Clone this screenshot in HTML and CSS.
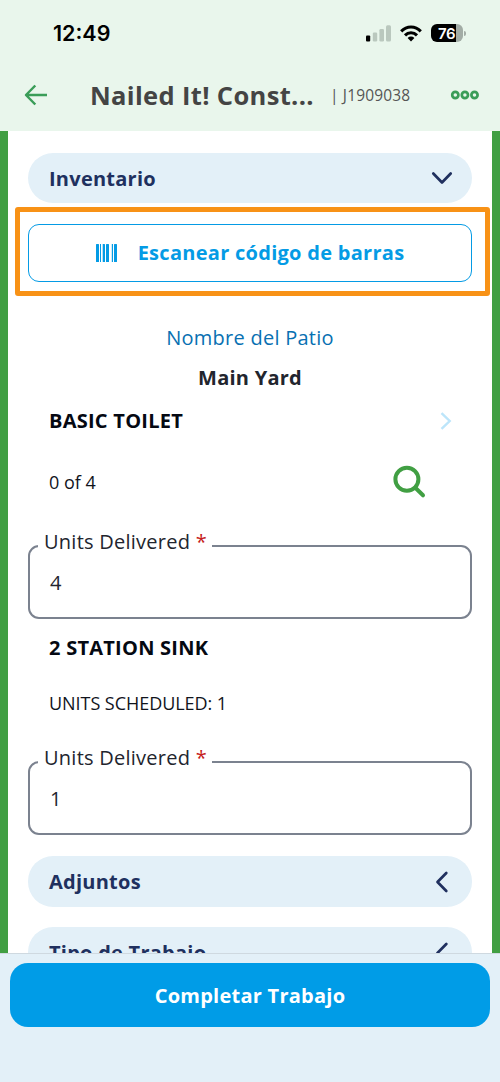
FILE: index.html
```html
<!DOCTYPE html>
<html lang="es">
<head>
<meta charset="utf-8">
<title>Nailed It! Construction</title>
<link rel="stylesheet" href="styles.css">
</head>
<body>
<div class="app">
  <header class="top">
    <div class="status">
      <span class="clock">12:49</span>
      <div class="indicators">
        <svg class="signal" width="26" height="17" viewBox="0 0 26 17"><rect x="0" y="10.5" width="4.2" height="6" rx="1"/><g fill="#bac8be"><rect x="6.8" y="7.5" width="4.4" height="9" rx="1.2"/><rect x="13.4" y="4" width="4.6" height="12.5" rx="1.3"/><rect x="20" y="0.2" width="5" height="16.3" rx="1.5"/></g></svg>
        <svg class="wifi" width="22" height="17" viewBox="0 0 22 17"><g fill="none" stroke="#000" stroke-width="3"><path d="M1.2 6.4C6.7.6 15.3.6 20.8 6.4"/><path d="M5 10.4c3.4-3.6 8.600-3.600 12 0"/></g><path d="M7.600 12.900c2-1.800 4.800-1.800 6.800 0L11 16.400z"/></svg>
        <div class="battery"><span class="battery-level">76</span><i class="battery-tip"></i></div>
      </div>
    </div>
    <div class="title-bar">
      <svg class="back" width="24" height="22" viewBox="0 0 24 22"><path d="M11.300 1.500 2 11l9.300 9.500M2 11h21" fill="none" stroke="#3a9d58" stroke-width="2.500" stroke-linejoin="round"/></svg>
      <h1 class="title">Nailed It! Const...</h1>
      <span class="job">| J1909038</span>
      <svg class="more" width="30" height="10" viewBox="0 0 30 10"><g fill="none" stroke="#3a9d58" stroke-width="2.700"><circle cx="5.300" cy="5" r="3.100"/><circle cx="14.900" cy="5" r="3.100"/><circle cx="24.500" cy="5" r="3.100"/></g></svg>
    </div>
  </header>

  <main class="content">
    <div class="pill"><span class="pill-text inventory">Inventario</span>
      <svg width="22" height="22" viewBox="0 0 22 22"><path d="M2.300 6.500 11 15.500 19.700 6.500"/></svg></div>
    <div class="highlight">
      <button class="scan">
        <svg class="barcode" width="22" height="18" viewBox="0 0 22 18"><g fill="#049be5"><rect x="0" width="3" height="18" rx=".5"/><rect x="4" width="1" height="18"/><rect x="6.700" width="2.300" height="18" rx=".5"/><rect x="10" width="3" height="18" rx=".5"/><rect x="15.800" width="1.200" height="18"/><rect x="18" width="3" height="18" rx=".5"/></g></svg>
        <span class="scan-text">Escanear código de barras</span>
      </button>
    </div>
    <p class="yard-label"><span>Nombre del Patio</span></p>
    <p class="yard-name"><span>Main Yard</span></p>
    <div class="item-row">
      <h2 class="item toilet">BASIC TOILET</h2>
      <svg width="12" height="20" viewBox="0 0 12 20"><path d="M1.500 2.200 9.700 10l-8.200 7.800" fill="none" stroke="#bce5fa" stroke-width="2.400"/></svg>
    </div>
    <div class="count-row">
      <span class="count">0 of 4</span>
      <svg width="34" height="34" viewBox="0 0 34 34"><g fill="none" stroke="#419f43" stroke-width="4"><circle cx="14.900" cy="14.300" r="11.500"/><path d="M23.300 22.800 31 30.300" stroke-linecap="round"/></g></svg>
    </div>
    <fieldset class="field"><legend><span>Units Delivered <b>*</b></span></legend><span class="value">4</span></fieldset>
    <h2 class="item sink">2 STATION SINK</h2>
    <p class="scheduled">UNITS SCHEDULED: 1</p>
    <fieldset class="field"><legend><span>Units Delivered <b>*</b></span></legend><span class="value">1</span></fieldset>
    <div class="pill attachments"><span class="pill-text">Adjuntos</span>
      <svg width="22" height="22" viewBox="0 0 22 22"><path d="M15.300 2 6.500 11l8.800 9"/></svg></div>
    <div class="pill work"><span class="pill-text">Tipo de Trabajo</span>
      <svg width="22" height="22" viewBox="0 0 22 22"><path d="M15.300 2 6.500 11l8.800 9"/></svg></div>
  </main>

  <footer class="footer"><button class="complete"><span>Completar Trabajo</span></button></footer>
</div>
</body>
</html>
```
FILE: styles.css
```css
* { box-sizing: border-box; }
body { margin: 0; background: #fff; font-family: "Open Sans", "Noto Sans", sans-serif; color: #22252e; }
h1, h2, p { margin: 0; }
button { font: inherit; letter-spacing: inherit; cursor: pointer; }
svg { display: block; flex: none; }
.app { width: 500px; height: 1082px; display: flex; flex-direction: column; overflow: hidden; }

.top { flex: none; height: 131px; background: #e9f6ec; }
.status { height: 59px; padding: 7px 37px 0 53px; display: flex; align-items: center; justify-content: space-between; }
.clock { font: 600 21.500px/28px Inter, sans-serif; color: #000; }
.indicators { display: flex; align-items: center; }
.wifi { margin-left: 8px; }
.battery { position: relative; width: 32px; height: 18px; margin-left: 9px; border-radius: 6px; background: linear-gradient(90deg, #000 25px, #a2aca5 25px); }
.battery-level { display: block; padding-left: 7px; font: 600 15px/19px Inter, sans-serif; letter-spacing: -.5px; color: #fff; }
.battery-tip { position: absolute; left: 33px; top: 7px; width: 2px; height: 5px; border-radius: 0 2px 2px 0; background: #a2aca5; }
.title-bar { height: 72px; padding: 0 20px 0 24px; display: flex; align-items: center; }
.title { margin-left: 42px; width: 240px; font-size: 25.500px; line-height: 34px; font-weight: 700; letter-spacing: .35px; color: #444; white-space: nowrap; }
.job { width: 100px; font-size: 15.500px; line-height: 24px; letter-spacing: .15px; color: #555; white-space: nowrap; }
.more { margin-left: 20px; }

.content { flex: none; height: 822px; overflow: hidden; border: solid #419f43; border-width: 0 8px; padding: 22px 20px 0; letter-spacing: .25px; }
.pill { height: 50px; padding: 0 19px 0 21px; border-radius: 25px; background: #e3f0f8; display: flex; align-items: center; justify-content: space-between; font-size: 20px; font-weight: 700; color: #20305f; }
.pill path { fill: none; stroke: #20305f; stroke-width: 2.700; stroke-linecap: round; stroke-linejoin: round; }
.highlight { height: 89px; margin: 4px -18px 0 -13px; padding: 12px 13px 0 8px; border: 5px solid #f89216; border-radius: 3px; }
.scan { width: 444px; height: 58px; padding: 0 0 1px; border: 1.500px solid #049be5; border-radius: 11px; background: #fff; color: #049be5; display: flex; align-items: center; justify-content: center; gap: 20px; font-size: 20px; font-weight: 700; letter-spacing: .28px; }
.yard-label { margin-top: 28px; line-height: 28px; font-size: 20px; text-align: center; color: #0870b2; }
.yard-name { margin-top: 12px; line-height: 28px; font-size: 20px; font-weight: 700; text-align: center; }
.item { font-size: 20px; line-height: 28px; font-weight: 700; color: #050912; white-space: nowrap; }
.item-row { height: 28px; margin-top: 15px; padding: 0 20px 0 21px; display: flex; align-items: center; justify-content: space-between; }
.count-row { height: 34px; margin-top: 30px; padding: 0 46px 0 21px; display: flex; align-items: center; justify-content: space-between; font-size: 18px; letter-spacing: 0; color: #11141c; }
.field { min-width: 0; height: 89px; margin: 31px 0 0; padding: 0 20px; border: 2px solid #7b828f; border-radius: 11px; }
.field legend { margin-left: -12px; padding: 0 6px 8px; width: 174px; line-height: 24px; font-size: 20px; white-space: nowrap; }
.field b { font-weight: 400; color: #c62020; }
.value { display: block; line-height: 42px; font-size: 20px; }
.sink { margin: 15px 0 0 21px; }
.scheduled { margin: 28px 0 0 21px; line-height: 26px; font-size: 18px; letter-spacing: -.05px; color: #11141c; }
.scheduled + .field { margin-top: 30px; }
.attachments { height: 51px; margin-top: 21px; }
.work { height: 51px; margin-top: 20px; }

.footer { flex: 1; padding: 9px 10px; border-top: 1px solid #cfd9e0; background: #e3f0f8; letter-spacing: .25px; }
.complete { width: 480px; height: 64px; padding: 0; border: 0; border-radius: 18px; background: #009ce7; color: #fff; font-size: 20px; font-weight: 700; }
```
